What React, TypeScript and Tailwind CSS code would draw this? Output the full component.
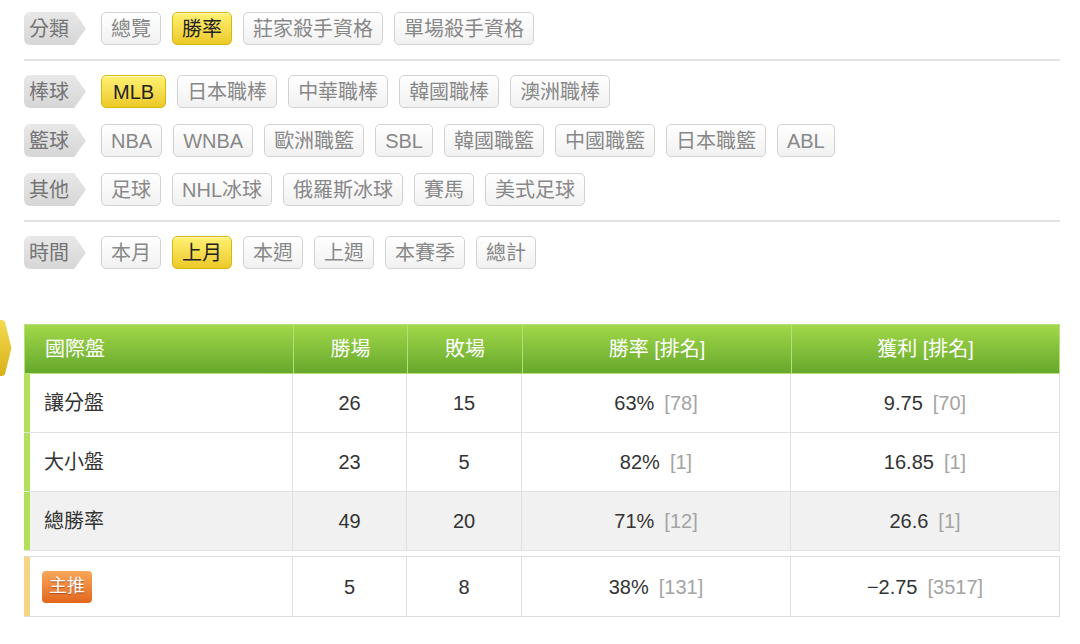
import React from "react";

type Chip = { text: string; active?: boolean; wide?: boolean };

const font = "font-['Liberation_Sans','Noto_Sans_CJK_TC',sans-serif]";

function Label({ text }: { text: string }) {
  return (
    <div className="flex h-[33px] w-[62px] shrink-0 items-center rounded-l-[6px] bg-gradient-to-b from-[#e8e8e8] to-[#d6d6d6] pl-[5px] text-[20px] text-[#747474] [clip-path:polygon(0_0,81%_0,100%_50%,81%_100%,0_100%)]">
      {text}
    </div>
  );
}

function ChipBtn({ chip }: { chip: Chip }) {
  const pad = chip.wide ? "px-[11px]" : "px-[9px]";
  return chip.active ? (
    <div className={`flex h-[33px] items-center rounded-[5px] border border-[#d6b80e] bg-gradient-to-b from-[#fff170] to-[#ecc923] ${pad} text-[20px] text-[#222] shadow-[inset_0_1px_0_rgba(255,255,255,0.6)]`}>
      {chip.text}
    </div>
  ) : (
    <div className={`flex h-[33px] items-center rounded-[5px] border border-[#d2d2d2] bg-gradient-to-b from-white to-[#f1f1f1] ${pad} text-[20px] text-[#888]`}>
      {chip.text}
    </div>
  );
}

function FilterRow({ label, chips }: { label: string; chips: Chip[] }) {
  return (
    <div className="flex items-center">
      <Label text={label} />
      <div className="ml-[15px] flex items-center gap-[11px]">
        {chips.map((c) => (
          <ChipBtn key={c.text} chip={c} />
        ))}
      </div>
    </div>
  );
}

const rows = [
  { name: "讓分盤", win: "26", lose: "15", rate: "63%", rateRank: "[78]", profit: "9.75", profitRank: "[70]", bg: "bg-white" },
  { name: "大小盤", win: "23", lose: "5", rate: "82%", rateRank: "[1]", profit: "16.85", profitRank: "[1]", bg: "bg-white" },
  { name: "總勝率", win: "49", lose: "20", rate: "71%", rateRank: "[12]", profit: "26.6", profitRank: "[1]", bg: "bg-[#f1f1f1]" },
];

function Value({ v, r }: { v: string; r: string }) {
  return (
    <span>
      <span className="text-[#333]">{v}</span>
      <span className="ml-[10px] text-[#a4a4a4]">{r}</span>
    </span>
  );
}

export default function App() {
  return (
    <div className={`relative min-h-[644px] w-[1080px] bg-white ${font}`}>
      <div className="pl-[24px] pr-[20px] pt-[12px]">
        <FilterRow
          label="分類"
          chips={[{ text: "總覽" }, { text: "勝率", active: true }, { text: "莊家殺手資格" }, { text: "單場殺手資格" }]}
        />
        <div className="my-[14px] h-[2px] bg-[#e2e2e2]" />
        <div className="flex flex-col gap-[16px]">
          <FilterRow
            label="棒球"
            chips={[{ text: "MLB", active: true, wide: true }, { text: "日本職棒" }, { text: "中華職棒" }, { text: "韓國職棒" }, { text: "澳洲職棒" }]}
          />
          <FilterRow
            label="籃球"
            chips={[
              { text: "NBA" },
              { text: "WNBA" },
              { text: "歐洲職籃" },
              { text: "SBL" },
              { text: "韓國職籃" },
              { text: "中國職籃" },
              { text: "日本職籃" },
              { text: "ABL" },
            ]}
          />
          <FilterRow
            label="其他"
            chips={[{ text: "足球" }, { text: "NHL冰球" }, { text: "俄羅斯冰球" }, { text: "賽馬" }, { text: "美式足球" }]}
          />
        </div>
        <div className="my-[14px] h-[2px] bg-[#e2e2e2]" />
        <FilterRow
          label="時間"
          chips={[{ text: "本月" }, { text: "上月", active: true }, { text: "本週" }, { text: "上週" }, { text: "本賽季" }, { text: "總計" }]}
        />
      </div>

      <div className="relative mt-[55px] ml-[24px] w-[1036px] text-[20px]">
        <svg className="absolute left-[-24px] top-[-6px]" width="12" height="60" viewBox="0 0 12 60">
          <defs>
            <linearGradient id="gold" x1="0" y1="0" x2="0" y2="1">
              <stop offset="0" stopColor="#f2dc50" />
              <stop offset="1" stopColor="#d8b01a" />
            </linearGradient>
          </defs>
          <path d="M0 2 L2 2 Q4 2 5 4 L11 28 Q12 30 11 32 L5 56 Q4 58 2 58 L0 58 Z" fill="url(#gold)" />
        </svg>

        <div className="flex h-[50px] border border-[#b7e07a] bg-gradient-to-b from-[#a2d84a] to-[#66a82c] text-white">
          <div className="flex w-[268px] items-center pl-[20px]">國際盤</div>
          <div className="flex w-[114px] items-center justify-center border-l border-[#b5df78]">勝場</div>
          <div className="flex w-[115px] items-center justify-center border-l border-[#b5df78]">敗場</div>
          <div className="flex w-[269px] items-center justify-center border-l border-[#b5df78]">勝率 [排名]</div>
          <div className="flex flex-1 items-center justify-center border-l border-[#b5df78]">獲利 [排名]</div>
        </div>

        {rows.map((r) => (
          <div key={r.name} className={`flex h-[59px] border-b border-r border-[#e0e0e0] ${r.bg} text-[#333]`}>
            <div className="flex w-[268px] items-center border-l-[6px] border-[#b3e05a] pl-[14px]">{r.name}</div>
            <div className="flex w-[114px] items-center justify-center border-l border-[#e0e0e0]">{r.win}</div>
            <div className="flex w-[115px] items-center justify-center border-l border-[#e0e0e0]">{r.lose}</div>
            <div className="flex w-[269px] items-center justify-center border-l border-[#e0e0e0]">
              <Value v={r.rate} r={r.rateRank} />
            </div>
            <div className="flex flex-1 items-center justify-center border-l border-[#e0e0e0]">
              <Value v={r.profit} r={r.profitRank} />
            </div>
          </div>
        ))}

        <div className="mt-[5px] flex h-[61px] border border-l-0 border-[#dcdcdc] bg-white text-[#333]">
          <div className="flex w-[268px] items-center border-l-[6px] border-[#f5d485] pl-[12px]">
            <span className="flex h-[32px] w-[50px] items-center justify-center rounded-[4px] bg-gradient-to-b from-[#f7a75a] to-[#e2661a] text-[18px] text-white [text-shadow:0_1px_1px_rgba(120,40,0,0.6)]">
              主推
            </span>
          </div>
          <div className="flex w-[114px] items-center justify-center border-l border-[#e0e0e0]">5</div>
          <div className="flex w-[115px] items-center justify-center border-l border-[#e0e0e0]">8</div>
          <div className="flex w-[269px] items-center justify-center border-l border-[#e0e0e0]">
            <Value v="38%" r="[131]" />
          </div>
          <div className="flex flex-1 items-center justify-center border-l border-[#e0e0e0]">
            <Value v="−2.75" r="[3517]" />
          </div>
        </div>
      </div>
    </div>
  );
}
